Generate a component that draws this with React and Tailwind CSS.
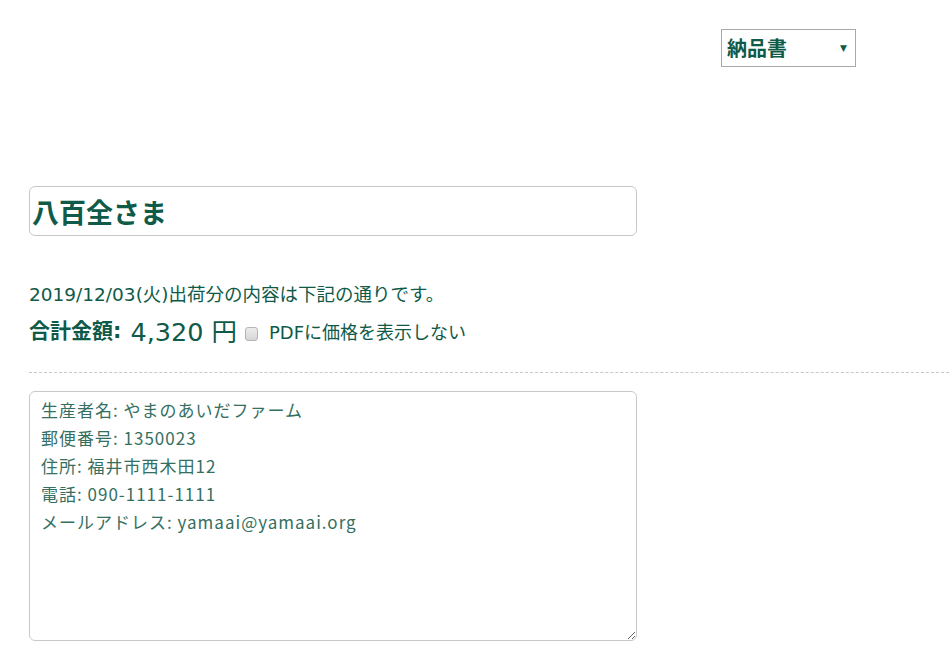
import React from "react";

const meiryo = { fontFamily: '"DejaVu Sans", "Noto Sans CJK JP", sans-serif' };
const gothic = { fontFamily: '"Noto Sans CJK JP", sans-serif' };

export default function App() {
  const producer = [
    "生産者名: やまのあいだファーム",
    "郵便番号: 1350023",
    "住所: 福井市西木田12",
    "電話: 090-1111-1111",
    "メールアドレス: yamaai@yamaai.org",
  ].join("\n");

  return (
    <div className="min-h-[656px] bg-white pl-[29px] text-[#0f5a48]" style={meiryo}>
      <div className="flex justify-end pr-[93px] pt-[29px]">
        <div className="relative h-[38px] w-[135px]">
          <select
            defaultValue="delivery"
            className="h-full w-full appearance-none border border-[#a9a9a9] bg-white pl-[5px] text-[20px] font-bold text-[#0f5a48] outline-none"
            style={gothic}
          >
            <option value="delivery">納品書</option>
            <option value="invoice">請求書</option>
          </select>
          <span className="pointer-events-none absolute right-[9px] top-[13px] text-[9px] text-[#0f5a48]">▼</span>
        </div>
      </div>

      <input
        defaultValue="八百全さま"
        className="mt-[119px] block h-[50px] w-[608px] rounded-[6px] border border-[#c8c8c8] px-[2px] text-[27px] font-bold text-[#0f5a48] outline-none"
        style={gothic}
      />

      <p className="mt-[47px] text-[18.5px] leading-[24px]">2019/12/03(火)出荷分の内容は下記の通りです。</p>

      <div className="mt-[10px] flex h-[30px] items-center">
        <span className="text-[21px] font-bold">合計金額:</span>
        <span className="ml-[9px] text-[25.5px] leading-[30px]">4,320 円</span>
        <input
          type="checkbox"
          className="ml-[8px] h-[14px] w-[13px] translate-y-[2px] appearance-none rounded-[3px] border border-[#b4b4b4] bg-gradient-to-b from-[#ececec] to-[#d6d6d6]"
        />
        <span className="ml-[11px] text-[18px]">PDFに価格を表示しない</span>
      </div>

      <div className="mt-[25px] border-t border-dashed border-[#c8c8c8]" />

      <textarea
        defaultValue={producer}
        className="mt-[18px] block h-[250px] w-[608px] resize rounded-[6px] border border-[#c8c8c8] px-[11px] pt-[4px] text-[17px] leading-[28px] tracking-[1px] text-[#356f62] outline-none"
        style={gothic}
      />
    </div>
  );
}
